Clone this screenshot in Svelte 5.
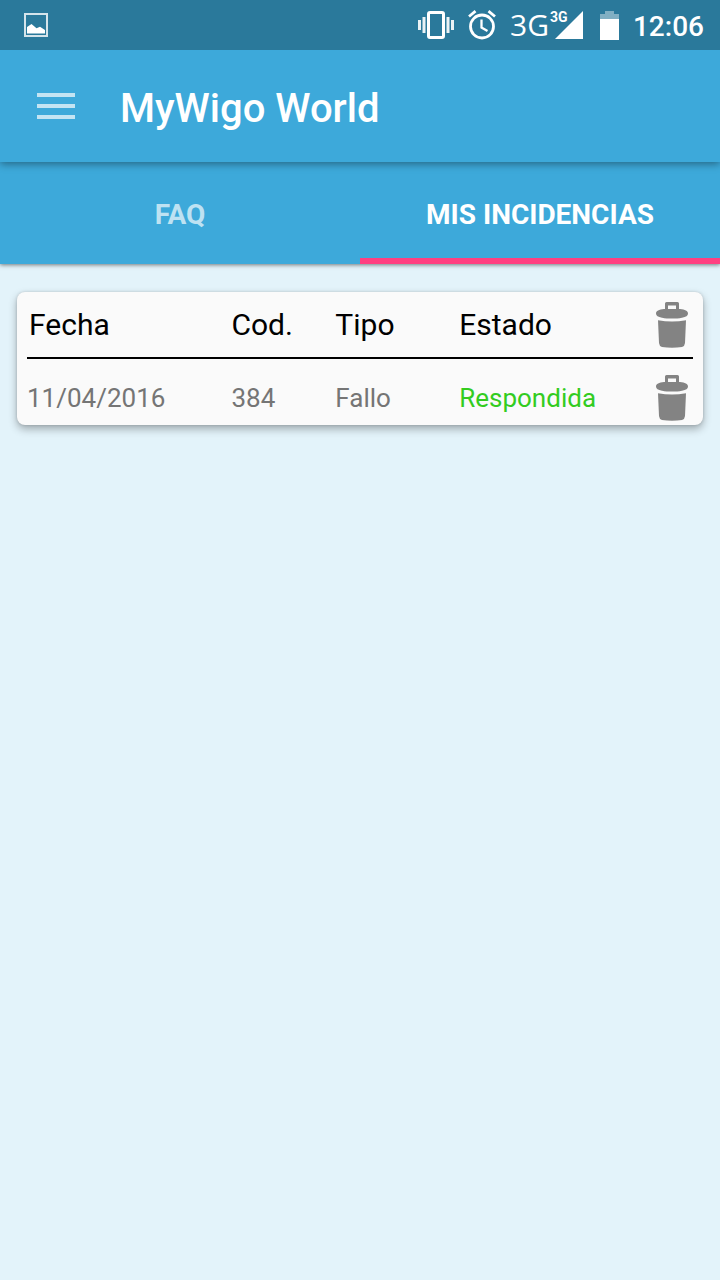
<script lang="ts">
	type Incident = {
		date: string;
		code: number;
		type: string;
		status: string;
	};

	let activeTab = $state('incidents');
	let incidents = $state<Incident[]>([
		{ date: '11/04/2016', code: 384, type: 'Fallo', status: 'Respondida' }
	]);

	const tabs = [
		{ id: 'faq', label: 'FAQ' },
		{ id: 'incidents', label: 'MIS INCIDENCIAS' }
	];

	function removeIncident(code: number) {
		incidents = incidents.filter((item) => item.code !== code);
	}

	function removeAll() {
		incidents = [];
	}
</script>

{#snippet trash()}
	<svg width="32" height="46" viewBox="0 0 32 46" fill="#838383" aria-hidden="true">
		<path fill-rule="evenodd" d="M9 8V1.5Q9 0 10.500 0H21.500Q23 0 23 1.500V8ZM12 3.500V7H20V3.500Z" />
		<path d="M0 11.500C0 9 3 7.500 8 7H24C29 7.500 32 9 32 11.500C32 14 30 15 26 15.700C20 16.900 12 16.900 6 15.700C2 15 0 14 0 11.500Z" />
		<path d="M2 18.200Q16 21 30 18.200L29 41Q28.800 44 26 45Q16 46.600 6 45Q3.200 44 3 41Z" />
	</svg>
{/snippet}

<div class="screen">
	<div class="status-bar">
		<svg class="picture" width="24" height="24" viewBox="0 0 24 24" aria-hidden="true">
			<rect x="1" y="1" width="22" height="22" fill="none" stroke="#d4e4eb" stroke-width="2" />
			<path d="M3 20.500V14L7.500 11L12.500 15.200L16 13.800L21 17V20.500Z" fill="#fff" />
		</svg>
		<svg width="36" height="28" viewBox="0 0 36 28" aria-hidden="true">
			<rect x="10.500" y="1.500" width="15" height="25" rx="1.500" fill="none" stroke="#fff" stroke-width="3" />
			<path d="M0 9H3V19H0ZM4.500 6H7.500V22H4.500ZM28.500 6H31.500V22H28.500ZM33 9H36V19H33Z" fill="#fff" fill-opacity=".9" />
		</svg>
		<svg class="alarm" width="28" height="30" viewBox="0 0 28 30" fill="none" stroke="#fff" aria-hidden="true">
			<circle cx="14" cy="16.500" r="11.500" stroke-width="2.800" />
			<path d="M1 6.500L7.500 1.200M27 6.500L20.500 1.200" stroke-width="2.800" />
			<path d="M13.500 9.500V17.500L19.500 21" stroke-width="2.300" />
		</svg>
		<div class="network">
			<span class="network-type">3G</span>
			<span class="signal">
				<svg width="28" height="28" viewBox="0 0 28 28" aria-hidden="true">
					<path d="M28 0V28H0Z" fill="#fff" />
				</svg>
				<span class="signal-type">3G</span>
			</span>
		</div>
		<svg class="battery" width="19" height="29" viewBox="0 0 19 29" aria-hidden="true">
			<path d="M5 0H14V3H19V8H0V3H5Z" fill="#80afc3" />
			<path d="M0 8H19V29H0Z" fill="#fff" />
		</svg>
		<time>12:06</time>
	</div>

	<header>
		<button class="menu" aria-label="Menu">
			<svg width="38" height="26" viewBox="0 0 38 26" fill="#c3e4f3" aria-hidden="true">
				<path d="M0 0H38V4H0ZM0 11H38V15H0ZM0 22H38V26H0Z" />
			</svg>
		</button>
		<h1>MyWigo World</h1>
	</header>

	<div class="tabs" role="tablist">
		{#each tabs as tab}
			<button
				class="tab"
				class:active={activeTab === tab.id}
				role="tab"
				aria-selected={activeTab === tab.id}
				onclick={() => (activeTab = tab.id)}
			>
				{tab.label}
			</button>
		{/each}
	</div>

	{#if activeTab === 'incidents'}
		<main>
			<div class="card">
				<table>
					<thead>
						<tr>
							<th class="date">Fecha</th>
							<th class="code">Cod.</th>
							<th class="type">Tipo</th>
							<th>Estado</th>
							<th class="action">
								<button class="delete" aria-label="Borrar todas" onclick={removeAll}>
									{@render trash()}
								</button>
							</th>
						</tr>
					</thead>
					<tbody>
						{#each incidents as item (item.code)}
							<tr>
								<td>{item.date}</td>
								<td>{item.code}</td>
								<td>{item.type}</td>
								<td class="answered">{item.status}</td>
								<td class="action">
									<button class="delete" aria-label="Borrar" onclick={() => removeIncident(item.code)}>
										{@render trash()}
									</button>
								</td>
							</tr>
						{/each}
					</tbody>
				</table>
			</div>
		</main>
	{/if}
</div>

<style>
	:global(body) {
		background: #e3f3fa;
	}

	.screen {
		min-height: 100vh;
		font-family: Roboto, 'Liberation Sans', sans-serif;
		background: #e3f3fa;
	}

	button {
		padding: 0;
		border: none;
		background: none;
		font-family: inherit;
		cursor: pointer;
	}

	svg {
		display: block;
		flex-shrink: 0;
	}

	.status-bar {
		display: flex;
		align-items: center;
		height: 50px;
		padding: 0 16px 0 24px;
		box-sizing: border-box;
		background: #2a799b;
		color: #fff;
	}

	.picture {
		margin-right: auto;
	}

	.alarm {
		margin-left: 14px;
	}

	.network {
		display: flex;
		align-items: center;
		margin-left: 14px;
	}

	.network-type {
		font-family: 'Open Sans', sans-serif;
		font-size: 30px;
		line-height: 50px;
	}

	.signal {
		position: relative;
		margin-left: 6px;
	}

	/* data type sits over the empty corner of the signal triangle */
	.signal-type {
		position: absolute;
		top: -4px;
		left: -5px;
		font-size: 14px;
		font-weight: 700;
		line-height: 20px;
	}

	.battery {
		margin: 0 14px 0 17px;
	}

	time {
		padding-top: 3px;
		font-size: 28px;
		font-weight: 500;
		line-height: 32px;
	}

	header {
		position: relative;
		display: flex;
		align-items: center;
		gap: 45px;
		height: 112px;
		padding: 0 37px;
		box-sizing: border-box;
		background: #3da9da;
		box-shadow: 0 2px 8px rgba(0, 0, 0, 0.4);
		clip-path: inset(0 0 -12px 0);
	}

	h1 {
		margin: 0;
		padding-top: 6px;
		color: #fff;
		font-size: 40px;
		font-weight: 500;
		line-height: 48px;
	}

	.tabs {
		display: flex;
		height: 102px;
		background: #3da9da;
		box-shadow: 0 1px 4px rgba(0, 0, 0, 0.5);
	}

	.tab {
		flex: 1;
		padding-top: 2px;
		border-top: 6px solid transparent;
		border-bottom: 6px solid transparent;
		color: #bee2f2;
		font-size: 28px;
		font-weight: 700;
	}

	.tab.active {
		border-bottom-color: #ff4081;
		color: #fff;
	}

	main {
		padding: 28px 17px;
	}

	.card {
		padding: 0 10px;
		border-radius: 8px;
		background: #fafafa;
		box-shadow: 0 4px 8px rgba(0, 0, 0, 0.3), 0 0 3px rgba(0, 0, 0, 0.15);
	}

	table {
		width: 100%;
		border-collapse: collapse;
		table-layout: fixed;
	}

	th,
	td {
		padding: 0;
		text-align: left;
		font-weight: 400;
	}

	th {
		height: 65px;
		border-bottom: 2px solid #000;
		color: #000;
		font-size: 30px;
	}

	td {
		height: 54px;
		padding-top: 12px;
		color: #757575;
		font-size: 26px;
	}

	.date {
		width: 30.4%;
		padding-left: 2px;
	}

	.code {
		width: 15.6%;
	}

	.type {
		width: 18.6%;
	}

	.action {
		width: 37px;
	}

	.delete {
		display: block;
	}

	td.answered {
		color: #33cc1f;
	}
</style>
